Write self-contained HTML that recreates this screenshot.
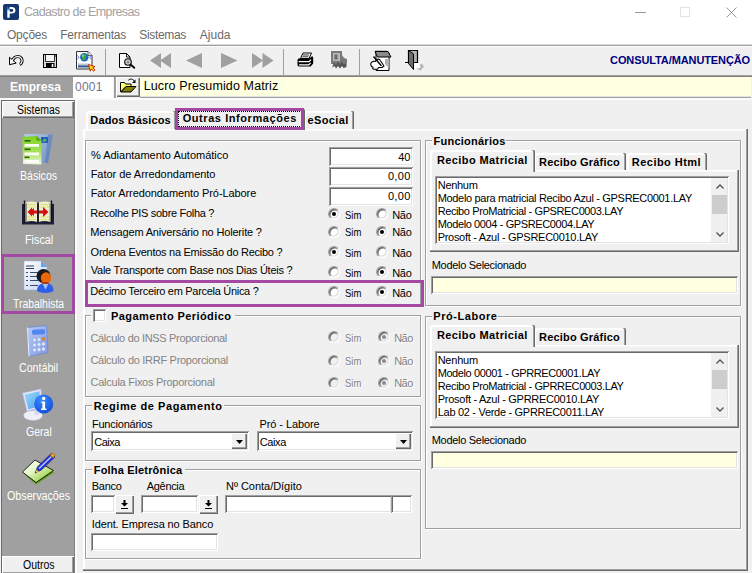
<!DOCTYPE html>
<html lang="pt-BR">
<head>
<meta charset="utf-8">
<title>Cadastro de Empresas</title>
<style>
html,body{margin:0;padding:0;}
body{width:752px;height:573px;overflow:hidden;background:#f0f0f0;position:relative;font-family:"Liberation Sans",sans-serif;font-size:11px;color:#000;}
.a{position:absolute;box-sizing:border-box;}
.t{position:absolute;white-space:pre;line-height:16px;height:16px;font-family:"Liberation Sans",sans-serif;}
.nw{transform-origin:0 0;}
.sunken{background:#fff;box-shadow:inset 1px 1px #a0a0a0,inset -1px -1px #fff,inset 2px 2px #696969,inset -2px -2px #e3e3e3;}
.raised{background:#f0f0f0;box-shadow:inset 1px 1px #fff,inset -1px -1px #696969,inset -2px -2px #a0a0a0;}
.group{border:1px solid #a0a0a0;box-shadow:inset 1px 1px #fff,1px 1px #fff;}
.lg{background:#f0f0f0;}
.yellow{background:#ffffe1;}
.hl{border:3px solid #a349a4;}
.tab{background:#f0f0f0;border-top-left-radius:2px;border-top-right-radius:2px;box-shadow:inset -1px 0 #696969,inset -2px 0 #a0a0a0,inset 2px 2px #fff;}
.page{background:#f0f0f0;box-shadow:inset -1px -1px #696969,inset -2px -2px #a0a0a0,inset 2px 1px #fff,inset 0 2px #f8f8f8;}
.radio{width:12px;height:12px;border-radius:50%;background:#fff;box-shadow:inset 1px 1px 0 0.5px #696969,inset -1px -1px 0 0.5px #e3e3e3;border:1px solid;border-color:#a0a0a0 #fff #fff #a0a0a0;}
.radio.on::after{content:"";position:absolute;left:3px;top:3px;width:4px;height:4px;border-radius:50%;background:#000;}
.radio.dis{background:#f0f0f0;}
.radio.dis.on::after{background:#8a8a8a;}
.sep{width:1px;background:#a0a0a0;top:49px;height:26px;}
svg{position:absolute;overflow:visible;}
</style>
</head>
<body>
<!-- title bar + menu -->
<div class="a" id="titlebar" style="left:0;top:0;width:752px;height:45px;background:#fff;border-bottom:1px solid #dcdcdc;"></div>
<svg style="left:3px;top:4px" width="16" height="16" viewBox="0 0 16 16"><rect width="16" height="16" rx="2" fill="#17386e"/><path d="M4.300 13.700V5.500h2.200V3h2.300c2.300 0 3.700 1.300 3.700 3.300s-1.400 3.300-3.700 3.300H6.700v4.100z M6.700 5v2.800h1.900c1 0 1.600-.5 1.600-1.400S9.600 5 8.600 5z" fill="#fff" fill-rule="evenodd"/><path d="M4 2.600l2.400 3.200-1.300.9z" fill="#39a8e8"/></svg>
<svg style="left:635px;top:12px" width="11" height="1"><rect width="11" height="1" fill="#9a9a9a"/></svg>
<svg style="left:680px;top:7px" width="10" height="10"><rect x=".5" y=".5" width="9" height="9" fill="none" stroke="#e2e2e2"/></svg>
<svg style="left:726px;top:7px" width="11" height="11"><path d="M.5.5l10 10M10.500 .5l-10 10" stroke="#9a9a9a" stroke-width="1" fill="none"/></svg>
<!-- toolbar -->
<div class="a" id="toolbar" style="left:0;top:45px;width:752px;height:32px;background:#f0f0f0;border-top:1px solid #a0a0a0;box-shadow:inset 0 1px #fff,inset 0 -1px #808080,inset 0 -2px #a0a0a0;"></div>
<div class="a sep" style="left:105px"></div>
<div class="a sep" style="left:283px"></div>
<div class="a sep" style="left:359px"></div>
<svg style="left:0;top:46px" width="752" height="30" viewBox="0 46 752 30" shape-rendering="auto">
<path d="M12.300 61.500C13 58.300 15.500 56.300 18.200 56.500c2.800.3 4.300 2.700 3.800 5.200-.3 1.500-1 2.300-2.200 2.800" stroke="#000" stroke-width="3.200" fill="none"/>
<path d="M9.500 57.300v7.400l6.700-1.600z" fill="#f4f4f4" stroke="#000" stroke-width="1" stroke-linejoin="round"/>
<path d="M11.500 62.500C12.500 58.500 15.500 56.300 18.200 56.500c2.800.3 4.300 2.700 3.800 5.200-.3 1.400-.8 2-1.800 2.500" stroke="#f4f4f4" stroke-width="1.300" fill="none"/>
<rect x="43.500" y="54.500" width="13" height="13" fill="#d8d8d8" stroke="#000"/>
<rect x="45.500" y="55" width="8.500" height="6" fill="#f6f6f6"/><path d="M45.500 55v6.500h9V55" fill="none" stroke="#000" stroke-width=".8"/>
<rect x="46" y="63" width="8.500" height="4.500" fill="#000"/><rect x="51.700" y="64" width="1.600" height="3" fill="#fff"/><rect x="55" y="55.500" width="1" height="1" fill="#000"/>
<path d="M76.500 51.500h11.500l4 4v13.500h-15.500z" fill="#fdfdfd" stroke="#333" stroke-width="1"/>
<path d="M88 51.500v4h4" fill="#e4e4e4" stroke="#444" stroke-width=".8"/>
<circle cx="84.300" cy="57.300" r="4.200" fill="#1f63c8"/><path d="M82 54.500c1.800-1.200 3.800-.6 4.300.7s-1.200 2.200-.6 3.500-1.800 2-3 .7-1.200-3.700-.7-4.900z" fill="#38a838"/><circle cx="83" cy="55.800" r="1.100" fill="#9fd4ff" opacity=".8"/>
<path d="M79 57.300l-1.800-2M79 57.300l-1.800 2M89.600 57.300l1.800-2M89.600 57.300l1.800 2" stroke="#5a72e0" stroke-width="1" fill="none"/>
<rect x="78" y="63.500" width="11.500" height="2.500" fill="#b8c4d8"/><rect x="78" y="65.500" width="11.500" height="2" fill="#3a5a90"/>
<path d="M88.500 64.500l6.500 2.200-2.300 1 2.300 2.300-1.300 1.200-2.400-2.300-1 2.300z" fill="#ffe400" stroke="#c81800" stroke-width=".9" stroke-linejoin="round"/>
<path d="M119.500 53.500h7l3.500 3.500v10.500h-10.500z" fill="#fff" stroke="#000" stroke-width="1"/>
<path d="M126.500 53.500v3.500h3.500" fill="none" stroke="#000" stroke-width=".9"/>
<circle cx="128" cy="62" r="3.300" fill="#d8d8d8" stroke="#000" stroke-width="1.100"/><circle cx="128" cy="62" r="1.500" fill="#888"/>
<path d="M130.500 64.500l3.800 3.300" stroke="#000" stroke-width="1.800" stroke-linecap="round"/>
<path d="M150 60.500l11-7.500v15zM160 60.500l11-7.500v15z" fill="#a0a0a0"/>
<path d="M186 60.500l16-7.500v15z" fill="#a0a0a0"/>
<path d="M237.500 60.500l-16.500-7.500v15z" fill="#a0a0a0"/>
<path d="M263 60.500l-11-7.500v15zM273.500 60.500l-11-7.500v15z" fill="#a0a0a0"/>
<path d="M300.500 58.500l2.500-5.500h8.500l-2.500 5.500z" fill="#fff" stroke="#000" stroke-width="1"/>
<path d="M303 55h6M302.300 56.800h6" stroke="#000" stroke-width=".8"/>
<path d="M297.500 60.200c0-1.200 1-2 2.500-2h9.500l2.500-2c1 .3 1.200 1 1.200 2v5.300l-2.500 3h-11.500c-1 0-1.700-.7-1.700-1.700z" fill="#000"/>
<path d="M298.700 61.600h10.300l2-2" stroke="#fff" stroke-width="1.300" fill="none"/>
<path d="M299 64.900h9.800l1.800-2" stroke="#fff" stroke-width="1.200" fill="none"/>
<rect x="331" y="51" width="11" height="13" fill="#7a7a7a"/><rect x="333" y="53" width="7" height="8" fill="#b8b8b8"/><rect x="334.500" y="54.500" width="3" height="5" fill="#6a6a6a"/>
<path d="M332 67.500l2-5 2 2 2-3 2 3 2-4 1.500 3 3-1.500v5l-3 1-1.500-2-2 2.500-2-2.500-2 2.500-1.500-2.500z" fill="#555"/>
<path d="M342 55l2 3 3 1v4l-3 1-2-3z" fill="#777"/>
<path d="M376 53h13v17.500h-13z" fill="#fff" stroke="#000" stroke-width="1"/>
<path d="M375 51.500h13l3 5.500h-13.500z" fill="#8a8a8a" stroke="#000" stroke-width="1"/>
<path d="M376 51.500v-1M378 51.500v-1M380 51.500v-1M382 51.500v-1M384 51.500v-1M386 51.500v-1" stroke="#000" stroke-width=".8"/>
<path d="M385 59h4v9l-4-4z" fill="#b0b0b0"/>
<path d="M371 63c1-1.500 3-2 4.500-1.500l2-2.200c1-.3 2.300.3 2.800 1.200l3.700 5.500-2 1.500h-3.500l-1 1.800h-3.500c-1.300-.2-1.500-1.300-1-2-1.600-.3-2.700-2.400-2-4.300z" fill="#fff" stroke="#000" stroke-width="1.100" stroke-linejoin="round"/>
<path d="M373.500 56.500l8 9.500" stroke="#000" stroke-width="1.300"/>
<path d="M408.500 50.500h9v12h-9z" fill="#b0b0b0" stroke="#000" stroke-width="1.200"/>
<path d="M408.500 50.500l5 3.500v15.500l-5-6z" fill="#6c6c6c" stroke="#000" stroke-width="1"/>
<path d="M405 62.500h4" stroke="#000" stroke-width="1"/>
<path d="M414 63h6v6h-6z" fill="#fff"/>
<path d="M416 68.500l3.500-.3 1.500-1.700-1.500-1.500 2-1.500 2.500 3-3.500 4z" fill="#b4b4b4"/>
</svg>
<!-- empresa row -->
<div class="a" style="left:0;top:77px;width:73px;height:21px;background:#a0a0a0;"></div>
<div class="a" style="left:73px;top:77px;width:40px;height:21px;background:#fff;"></div>
<div class="a" style="left:114px;top:77px;width:2px;height:21px;background:#a0a0a0;"></div>
<div class="a raised" style="left:116px;top:77px;width:24px;height:20px;"></div>
<svg style="left:115px;top:77px" width="25" height="20" viewBox="115 77 25 20">
<path d="M120.500 92V82.500h4l1 1.500h5.500v2.500h-5l-5.500 5.500z" fill="#ffff70" stroke="#000" stroke-width="1" stroke-linejoin="round"/>
<path d="M121 92l5-5.500h10l-5 5.500z" fill="#808000" stroke="#000" stroke-width="1" stroke-linejoin="round"/>
<path d="M128.300 80.300c1.700-1.800 4.500-1.700 6 .8" fill="none" stroke="#000" stroke-width="1"/><path d="M135.500 79.500v3.500h-3.500z" fill="#000"/>
</svg>
<div class="a yellow" style="left:140px;top:77px;width:611px;height:19px;box-shadow:0 1px #e3e3e3,0 2px #a0a0a0;"></div>
<div class="a" style="left:0;top:98px;width:752px;height:2px;background:#fafafa;"></div>
<!-- sidebar -->
<div class="a" id="sidebar" style="left:1px;top:100px;width:74px;height:473px;background:#a0a0a0;border-left:1px solid #696969;border-top:1px solid #696969;border-right:1px solid #808080;"></div>
<div class="a" style="left:75px;top:100px;width:2px;height:473px;background:#fbfbfb;"></div>
<div class="a raised" style="left:2px;top:101px;width:72px;height:17px;"></div>
<div class="a raised" style="left:2px;top:556px;width:72px;height:18px;"></div>
<svg style="left:0;top:100px" width="76" height="473" viewBox="0 100 76 473">
<defs>
<linearGradient id="gG" x1="0" y1="0" x2="0" y2="1"><stop offset="0" stop-color="#7ed321"/><stop offset=".55" stop-color="#a6e25a"/><stop offset="1" stop-color="#eef8e0"/></linearGradient>
<linearGradient id="gB" x1="0" y1="0" x2="1" y2="1"><stop offset="0" stop-color="#b8cbe8"/><stop offset="1" stop-color="#6f8fc4"/></linearGradient>
<linearGradient id="gD" x1="0" y1="0" x2="1" y2="1"><stop offset="0" stop-color="#ffffff"/><stop offset="1" stop-color="#c8d4f4"/></linearGradient>
<linearGradient id="gC" x1="0" y1="0" x2="1" y2="1"><stop offset="0" stop-color="#b8ccf8"/><stop offset="1" stop-color="#7f98e0"/></linearGradient>
<radialGradient id="gI" cx=".4" cy=".3" r=".8"><stop offset="0" stop-color="#3d8bff"/><stop offset="1" stop-color="#0a4ad8"/></radialGradient>
<linearGradient id="gS" x1="0" y1="0" x2="1" y2="1"><stop offset="0" stop-color="#9adcff"/><stop offset="1" stop-color="#4f9fe8"/></linearGradient>
<linearGradient id="gP" x1="0" y1="0" x2="1" y2="1"><stop offset="0" stop-color="#ffffff"/><stop offset=".4" stop-color="#e4f6c8"/><stop offset="1" stop-color="#78c010"/></linearGradient>
</defs>
<path d="M24 134l29 .5-5 28-16 .5z" fill="url(#gB)"/>
<path d="M48 134.500l5 0-5 28.500-3-.5z" fill="#5f7fb8" opacity=".7"/>
<rect x="41" y="137" width="7" height="6" fill="#1f5fc0"/><path d="M42.500 141l2-2.500 2 1-1.500 2.500z" fill="#5fc04a"/>
<path d="M22.500 137l14-1 5 4.500v24l-18.500-.5z" fill="url(#gG)"/>
<path d="M36.500 136l5 4.500-5 .3z" fill="#5fa018"/>
<rect x="24.500" y="144" width="14.500" height="2.800" fill="#fff" opacity=".95"/><rect x="24.500" y="152.500" width="14.500" height="2.800" fill="#fff" opacity=".95"/><rect x="24.500" y="160" width="14.500" height="2.800" fill="#fff" opacity=".95"/>
<rect x="24.500" y="140" width="6" height="1.600" fill="#2f6010"/><rect x="24.500" y="148.500" width="6" height="1.600" fill="#2f6010"/><rect x="24.500" y="156.500" width="5" height="1.600" fill="#2f6010"/>
<path d="M22 204h32v20.500h-32z" fill="#20203a"/>
<path d="M24.500 200.500v22M51.500 200.500v22" stroke="#111" stroke-width="1.400"/>
<path d="M25.500 202.500c4-1.300 8-1.300 11.700 0v19.500c-3.700-1.300-7.700-1.300-11.700 0z" fill="#eeeed0"/>
<path d="M38.800 202.500c3.700-1.300 7.700-1.300 11.700 0v19.500c-4-1.300-8-1.300-11.700 0z" fill="#eeeed0"/>
<path d="M27 204.500h9M27 207h9M27 217h9M27 219.500h9M40.500 204.500h9M40.500 207h9M40.500 217h9M40.500 219.500h9" stroke="#e0e070" stroke-width="1.200"/>
<path d="M26.500 203v19M50 203v19" stroke="#777" stroke-width=".8"/>
<path d="M27.500 212l4.500-4.500v2l2-1.500v2.500h9v-3.500l5.500 5-5.500 5v-3.500h-9v2.500l-2-1.500v2z" fill="#d41010"/>
<path d="M38 202.500v20" stroke="#1a1a1a" stroke-width="1.600"/>
<path d="M24 261h17l6 6v23h-23z" fill="url(#gD)" stroke="#9fb0d8" stroke-width=".6"/>
<path d="M41 261l6 6h-6z" fill="#5fa8f0"/>
<path d="M26 266h8M26 268.500h8" stroke="#2a3a58" stroke-width="1.200"/>
<path d="M26 272.500h2M30 272.500h9M26 276.500h2M30 276.500h8M26 280.500h2M30 280.500h8M26 285.500h2M30 285.500h8" stroke="#3a4a68" stroke-width="1.100"/>
<path d="M37 291c0-5 3-8 8.500-8s8 3 8 8c-3 2.500-13 2.500-16.500 0z" fill="#2f5fe8"/>
<path d="M42.500 283.500l3 6 3-6z" fill="#9fc8ff"/>
<ellipse cx="43.500" cy="276" rx="7" ry="7" fill="#1a1a1a"/>
<ellipse cx="46" cy="278" rx="5.200" ry="5.800" fill="#e8680a"/>
<path d="M42.500 284h6v-2h-6z" fill="#b03a08"/>
<path d="M27.500 327.500l19-2 1.500 27-19 4z" fill="url(#gC)" stroke="#6f88d0" stroke-width=".8"/>
<path d="M27.500 327.500l1.500 29" stroke="#dfe8ff" stroke-width="1.200"/>
<rect x="32" y="329.500" width="13" height="5" rx="1.500" fill="#4f86f0" transform="rotate(-3 38 332)"/>
<circle cx="34.5" cy="340.0" r="1.900" fill="#dfe8ff" stroke="#7f98e0" stroke-width=".5"/>
<circle cx="39.0" cy="339.5" r="1.900" fill="#dfe8ff" stroke="#7f98e0" stroke-width=".5"/>
<circle cx="43.5" cy="339.0" r="1.900" fill="#f08020" stroke="#7f98e0" stroke-width=".5"/>
<circle cx="34.5" cy="345.0" r="1.900" fill="#dfe8ff" stroke="#7f98e0" stroke-width=".5"/>
<circle cx="39.0" cy="344.5" r="1.900" fill="#dfe8ff" stroke="#7f98e0" stroke-width=".5"/>
<circle cx="43.5" cy="344.0" r="1.900" fill="#dfe8ff" stroke="#7f98e0" stroke-width=".5"/>
<circle cx="34.5" cy="350.0" r="1.900" fill="#dfe8ff" stroke="#7f98e0" stroke-width=".5"/>
<circle cx="39.0" cy="349.5" r="1.900" fill="#dfe8ff" stroke="#7f98e0" stroke-width=".5"/>
<circle cx="43.5" cy="349.0" r="1.900" fill="#dfe8ff" stroke="#7f98e0" stroke-width=".5"/>
<ellipse cx="33" cy="415.500" rx="9.500" ry="5" fill="#eef0f8" stroke="#b8b8d0" stroke-width=".6"/>
<path d="M33 406h6v9h-4z" fill="#d8d8f0"/>
<path d="M22.500 393l18.500-4 1 18-15 4.500z" fill="#e8e8f8" stroke="#b0b0d8" stroke-width=".7"/>
<path d="M24.500 394.500l15-3.200.8 14.500-12 3.700z" fill="url(#gS)"/>
<circle cx="43.700" cy="404" r="9.500" fill="url(#gI)"/>
<circle cx="43.700" cy="398.500" r="1.700" fill="#fff"/><path d="M41.500 401.500h3.600v7h1.400v1.500h-5.500v-1.500h1.400v-5.500h-1z" fill="#fff"/>
<path d="M24 474l12 10.500 18-12-2-1.500-16 10z" fill="#5a9a10"/>
<path d="M22.500 472l12.500-12 18.500 10.500-17.500 12z" fill="url(#gP)" stroke="#111" stroke-width=".9"/>
<path d="M35.300 472.700l2.300-6 13.700-13.200 3.500 3.500-13.700 13.200z" fill="#2838e0" stroke="#101060" stroke-width=".7"/>
<path d="M39 468.500l12.500-12" stroke="#c8d0ff" stroke-width="1.100"/>
<path d="M50 455l2.500-2 2.500 2.500-2 2.500z" fill="#e8a820" stroke="#805000" stroke-width=".6"/>
<path d="M35 473.500l1.500-4 2.500 2.500z" fill="#e8c060"/><path d="M35 473.500l.7-1.800 1.100 1.100z" fill="#222"/>
</svg>
<!-- main tab control -->
<div class="a tab" style="left:86px;top:111px;width:90px;height:19px;"></div>
<div class="a tab" style="left:304px;top:111px;width:50px;height:19px;"></div>
<div class="a page" style="left:83px;top:129px;width:665px;height:442px;"></div>
<div class="a tab" style="left:175px;top:109px;width:130px;height:21px;"></div>
<div class="a" style="left:178px;top:111px;width:124px;height:16px;border:1px dotted #000;"></div>
<!-- left groups -->
<div class="a group" style="left:85px;top:140px;width:336px;height:166px;"></div>
<div class="a group" style="left:85px;top:315px;width:336px;height:82px;"></div>
<div class="a lg" style="left:91px;top:308px;width:144px;height:15px;"></div>
<div class="a sunken" style="left:93px;top:309px;width:13px;height:13px;"></div>
<div class="a group" style="left:85px;top:405px;width:336px;height:56px;"></div>
<div class="a lg" style="left:92px;top:398px;width:132px;height:14px;"></div>
<div class="a group" style="left:85px;top:469px;width:336px;height:90px;"></div>
<div class="a lg" style="left:92px;top:462px;width:93px;height:14px;"></div>
<!-- numeric inputs -->
<div class="a sunken" style="left:329px;top:147px;width:84px;height:19px;"></div>
<div class="a sunken" style="left:329px;top:167px;width:84px;height:19px;"></div>
<div class="a sunken" style="left:329px;top:187px;width:84px;height:19px;"></div>
<div class="a radio on" style="left:328px;top:208px"></div>
<div class="a radio" style="left:376px;top:208px"></div>
<div class="a radio" style="left:328px;top:226px"></div>
<div class="a radio on" style="left:376px;top:226px"></div>
<div class="a radio on" style="left:328px;top:246px"></div>
<div class="a radio" style="left:376px;top:246px"></div>
<div class="a radio" style="left:328px;top:266px"></div>
<div class="a radio on" style="left:376px;top:266px"></div>
<div class="a radio" style="left:328px;top:286px"></div>
<div class="a radio on" style="left:376px;top:286px"></div>
<div class="a radio dis" style="left:328px;top:331px"></div>
<div class="a radio dis on" style="left:378px;top:331px"></div>
<div class="a radio dis" style="left:328px;top:355px"></div>
<div class="a radio dis on" style="left:378px;top:355px"></div>
<div class="a radio dis" style="left:328px;top:377px"></div>
<div class="a radio dis on" style="left:378px;top:377px"></div>
<!-- combos -->
<div class="a sunken" style="left:91px;top:431px;width:158px;height:20px;"></div>
<div class="a raised" style="left:231px;top:433px;width:16px;height:16px;"></div>
<svg style="left:236px;top:440px" width="7" height="4"><path d="M0 0h7L3.500 4z" fill="#000"/></svg>
<div class="a sunken" style="left:257px;top:431px;width:156px;height:20px;"></div>
<div class="a raised" style="left:395px;top:433px;width:16px;height:16px;"></div>
<svg style="left:400px;top:440px" width="7" height="4"><path d="M0 0h7L3.500 4z" fill="#000"/></svg>
<!-- folha eletronica -->
<div class="a sunken" style="left:91px;top:495px;width:24px;height:18px;"></div>
<div class="a raised" style="left:115px;top:495px;width:19px;height:19px;"></div>
<svg style="left:121px;top:500px" width="7" height="9"><path d="M2.500 0h2v3H7L3.500 6.500 0 3h2.500zM0 8h7v1H0z" fill="#000"/></svg>
<div class="a sunken" style="left:141px;top:495px;width:57px;height:18px;"></div>
<div class="a raised" style="left:199px;top:495px;width:19px;height:19px;"></div>
<svg style="left:205px;top:500px" width="7" height="9"><path d="M2.500 0h2v3H7L3.500 6.500 0 3h2.500zM0 8h7v1H0z" fill="#000"/></svg>
<div class="a sunken" style="left:225px;top:495px;width:167px;height:18px;"></div>
<div class="a sunken" style="left:391px;top:495px;width:21px;height:18px;"></div>
<div class="a sunken" style="left:91px;top:533px;width:127px;height:18px;"></div>
<div class="a group" style="left:425px;top:140px;width:316px;height:166px;"></div>
<div class="a lg" style="left:432px;top:133px;width:74px;height:14px;"></div>
<div class="a tab" style="left:534px;top:153px;width:92px;height:18px;"></div>
<div class="a tab" style="left:627px;top:153px;width:80px;height:18px;"></div>
<div class="a page" style="left:430px;top:170px;width:309px;height:82px;"></div>
<div class="a tab" style="left:430px;top:150px;width:105px;height:22px;"></div>
<div class="a sunken" style="left:435px;top:176px;width:294px;height:68px;"></div>
<div class="a" style="left:711px;top:178px;width:16px;height:64px;background:#f0f0f0;"></div>
<div class="a" style="left:712px;top:195px;width:15px;height:19px;background:#cdcdcd;"></div>
<svg style="left:716px;top:184px" width="8" height="5"><path d="M.5 4.500L4 1l3.500 3.500" fill="none" stroke="#505050" stroke-width="1.300"/></svg>
<svg style="left:716px;top:232px" width="8" height="5"><path d="M.5 .5L4 4l3.500-3.500" fill="none" stroke="#505050" stroke-width="1.300"/></svg>
<div class="a sunken yellow" style="left:431px;top:276px;width:307px;height:18px;"></div>
<div class="a group" style="left:425px;top:316px;width:316px;height:213px;"></div>
<div class="a lg" style="left:432px;top:308px;width:66px;height:14px;"></div>
<div class="a tab" style="left:534px;top:328px;width:92px;height:18px;"></div>
<div class="a page" style="left:430px;top:345px;width:309px;height:83px;"></div>
<div class="a tab" style="left:430px;top:325px;width:105px;height:22px;"></div>
<div class="a sunken" style="left:435px;top:351px;width:294px;height:68px;"></div>
<div class="a" style="left:711px;top:353px;width:16px;height:64px;background:#f0f0f0;"></div>
<div class="a" style="left:712px;top:370px;width:15px;height:19px;background:#cdcdcd;"></div>
<svg style="left:716px;top:359px" width="8" height="5"><path d="M.5 4.500L4 1l3.500 3.500" fill="none" stroke="#505050" stroke-width="1.300"/></svg>
<svg style="left:716px;top:407px" width="8" height="5"><path d="M.5 .5L4 4l3.500-3.500" fill="none" stroke="#505050" stroke-width="1.300"/></svg>
<div class="a sunken yellow" style="left:431px;top:451px;width:307px;height:18px;"></div>
<span class="t" style="left:23.88px;top:4px;font-size:12.5px;letter-spacing:-0.614px;color:#a2a2a2;">Cadastro de Empresas</span>
<span class="t" style="left:6.97px;top:27px;font-size:12px;letter-spacing:-0.2px;color:#6a6a6a;">Opções</span>
<span class="t" style="left:60.24px;top:27px;font-size:12px;letter-spacing:-0.198px;color:#6a6a6a;">Ferramentas</span>
<span class="t" style="left:139.3px;top:27px;font-size:12px;letter-spacing:-0.333px;color:#6a6a6a;">Sistemas</span>
<span class="t" style="left:199.83px;top:27px;font-size:12px;letter-spacing:-0.01px;color:#6a6a6a;">Ajuda</span>
<span class="t" style="left:610.07px;top:52px;letter-spacing:-0.103px;font-weight:bold;color:#000080;">CONSULTA/MANUTENÇÃO</span>
<span class="t" style="left:9.89px;top:79px;font-size:12px;letter-spacing:0.039px;font-weight:bold;color:#fff;">Empresa</span>
<span class="t" style="left:75.05px;top:79px;font-size:12px;letter-spacing:0.217px;color:#74748a;">0001</span>
<span class="t" style="left:143.7px;top:78px;font-size:12.5px;letter-spacing:0.123px;">Lucro Presumido Matriz</span>
<span class="t nw" style="left:16.87px;top:102px;font-size:12.5px;transform:scaleX(0.837);">Sistemas</span>
<span class="t nw" style="left:19.85px;top:168px;font-size:12.5px;transform:scaleX(0.848);color:#fff;">Básicos</span>
<span class="t nw" style="left:24.83px;top:232px;font-size:12.5px;transform:scaleX(0.864);color:#fff;">Fiscal</span>
<span class="t nw" style="left:13.3px;top:296px;font-size:12.5px;transform:scaleX(0.832);color:#fff;">Trabalhista</span>
<span class="t nw" style="left:18.86px;top:360px;font-size:12.5px;transform:scaleX(0.852);color:#fff;">Contábil</span>
<span class="t nw" style="left:25.89px;top:424px;font-size:12.5px;transform:scaleX(0.842);color:#fff;">Geral</span>
<span class="t nw" style="left:6.74px;top:488px;font-size:12.5px;transform:scaleX(0.857);color:#fff;">Observações</span>
<span class="t nw" style="left:22.88px;top:557px;font-size:12.5px;transform:scaleX(0.842);">Outros</span>
<span class="t" style="left:90.34px;top:112px;letter-spacing:0.118px;font-weight:bold;">Dados Básicos</span>
<span class="t" style="left:182.63px;top:110px;letter-spacing:0.575px;font-weight:bold;">Outras Informações</span>
<span class="t" style="left:307.52px;top:112px;letter-spacing:0.374px;font-weight:bold;">eSocial</span>
<span class="t" style="left:90.96px;top:147px;letter-spacing:-0.008px;">% Adiantamento Automático</span>
<span class="t" style="left:90.63px;top:166px;letter-spacing:-0.023px;">Fator de Arredondamento</span>
<span class="t" style="left:90.63px;top:185px;letter-spacing:-0.082px;">Fator Arredondamento Pró-Labore</span>
<span class="t" style="left:90.28px;top:205px;letter-spacing:-0.302px;">Recolhe PIS sobre Folha ?</span>
<span class="t" style="left:90.36px;top:224px;letter-spacing:-0.173px;">Mensagem Aniversário no Holerite ?</span>
<span class="t" style="left:90.61px;top:244px;letter-spacing:-0.274px;">Ordena Eventos na Emissão do Recibo ?</span>
<span class="t" style="left:90.8px;top:262px;letter-spacing:-0.253px;">Vale Transporte com Base nos Dias Úteis ?</span>
<span class="t" style="left:90.28px;top:283px;letter-spacing:-0.296px;">Décimo Terceiro em Parcela Única ?</span>
<span class="t" style="left:398.2px;top:149px;letter-spacing:-0.09px;">40</span>
<span class="t" style="left:387.88px;top:168px;letter-spacing:0.36px;">0,00</span>
<span class="t" style="left:387.88px;top:188px;letter-spacing:0.36px;">0,00</span>
<span class="t nw" style="left:344.64px;top:207px;transform:scaleX(0.862);">Sim</span>
<span class="t" style="left:392.19px;top:207px;letter-spacing:-0.257px;">Não</span>
<span class="t nw" style="left:344.64px;top:224px;transform:scaleX(0.862);">Sim</span>
<span class="t" style="left:392.19px;top:224px;letter-spacing:-0.257px;">Não</span>
<span class="t nw" style="left:344.64px;top:245px;transform:scaleX(0.862);">Sim</span>
<span class="t" style="left:392.19px;top:245px;letter-spacing:-0.257px;">Não</span>
<span class="t nw" style="left:344.64px;top:265px;transform:scaleX(0.862);">Sim</span>
<span class="t" style="left:392.19px;top:265px;letter-spacing:-0.257px;">Não</span>
<span class="t nw" style="left:344.64px;top:285px;transform:scaleX(0.862);">Sim</span>
<span class="t" style="left:392.19px;top:285px;letter-spacing:-0.257px;">Não</span>
<span class="t" style="left:110.98px;top:308px;letter-spacing:0.417px;font-weight:bold;">Pagamento Periódico</span>
<span class="t" style="left:90.46px;top:330px;letter-spacing:-0.321px;color:#838383;">Cálculo do INSS Proporcional</span>
<span class="t" style="left:90.46px;top:352px;letter-spacing:-0.287px;color:#838383;">Cálculo do IRRF Proporcional</span>
<span class="t" style="left:90.56px;top:374px;letter-spacing:-0.257px;color:#838383;">Calcula Fixos Proporcional</span>
<span class="t nw" style="left:344.64px;top:330px;transform:scaleX(0.862);color:#838383;text-shadow:1px 1px 0 #fff;">Sim</span>
<span class="t" style="left:394.17px;top:330px;letter-spacing:-0.49px;color:#838383;text-shadow:1px 1px 0 #fff;">Não</span>
<span class="t nw" style="left:344.64px;top:353px;transform:scaleX(0.862);color:#838383;text-shadow:1px 1px 0 #fff;">Sim</span>
<span class="t" style="left:394.17px;top:353px;letter-spacing:-0.49px;color:#838383;text-shadow:1px 1px 0 #fff;">Não</span>
<span class="t nw" style="left:344.64px;top:375px;transform:scaleX(0.862);color:#838383;text-shadow:1px 1px 0 #fff;">Sim</span>
<span class="t" style="left:394.17px;top:375px;letter-spacing:-0.49px;color:#838383;text-shadow:1px 1px 0 #fff;">Não</span>
<span class="t" style="left:93.83px;top:398px;letter-spacing:0.558px;font-weight:bold;">Regime de Pagamento</span>
<span class="t" style="left:91.95px;top:416px;letter-spacing:-0.22px;">Funcionários</span>
<span class="t" style="left:259.53px;top:416px;letter-spacing:-0.088px;">Pró - Labore</span>
<span class="t" style="left:94.24px;top:434px;letter-spacing:-0.484px;">Caixa</span>
<span class="t" style="left:259.76px;top:434px;letter-spacing:-0.401px;">Caixa</span>
<span class="t" style="left:93.83px;top:462px;letter-spacing:0.177px;font-weight:bold;">Folha Eletrônica</span>
<span class="t" style="left:91.82px;top:478px;letter-spacing:-0.3px;">Banco</span>
<span class="t" style="left:146.86px;top:478px;letter-spacing:-0.348px;">Agência</span>
<span class="t" style="left:226.02px;top:478px;letter-spacing:-0.029px;">Nº Conta/Dígito</span>
<span class="t" style="left:91.72px;top:516px;letter-spacing:-0.118px;">Ident. Empresa no Banco</span>
<span class="t" style="left:433.49px;top:133px;letter-spacing:0.249px;font-weight:bold;">Funcionários</span>
<span class="t" style="left:436.98px;top:152px;letter-spacing:0.403px;font-weight:bold;">Recibo Matricial</span>
<span class="t" style="left:539.03px;top:154px;letter-spacing:0.191px;font-weight:bold;">Recibo Gráfico</span>
<span class="t" style="left:631.81px;top:154px;letter-spacing:0.468px;font-weight:bold;">Recibo Html</span>
<span class="t" style="left:437.76px;top:177px;letter-spacing:-0.305px;">Nenhum</span>
<span class="t" style="left:437.63px;top:190px;letter-spacing:-0.315px;">Modelo para matricial Recibo Azul - GPSREC0001.LAY</span>
<span class="t" style="left:437.63px;top:203px;letter-spacing:-0.378px;">Recibo ProMatricial - GPSREC0003.LAY</span>
<span class="t" style="left:437.68px;top:216px;letter-spacing:-0.385px;">Modelo 0004 - GPSREC0004.LAY</span>
<span class="t" style="left:437.63px;top:229px;letter-spacing:-0.281px;">Prosoft - Azul - GPSREC0010.LAY</span>
<span class="t" style="left:431.76px;top:257px;letter-spacing:-0.301px;">Modelo Selecionado</span>
<span class="t" style="left:433.34px;top:308px;letter-spacing:0.546px;font-weight:bold;">Pró-Labore</span>
<span class="t" style="left:436.98px;top:327px;letter-spacing:0.403px;font-weight:bold;">Recibo Matricial</span>
<span class="t" style="left:539.03px;top:329px;letter-spacing:0.191px;font-weight:bold;">Recibo Gráfico</span>
<span class="t" style="left:437.63px;top:352px;letter-spacing:-0.212px;">Nenhum</span>
<span class="t" style="left:437.63px;top:365px;letter-spacing:-0.397px;">Modelo 00001 - GPRREC0001.LAY</span>
<span class="t" style="left:437.76px;top:378px;letter-spacing:-0.386px;">Recibo ProMatricial - GPRREC0003.LAY</span>
<span class="t" style="left:437.76px;top:391px;letter-spacing:-0.272px;">Prosoft - Azul - GPRREC0010.LAY</span>
<span class="t" style="left:437.76px;top:404px;letter-spacing:-0.3px;">Lab 02 - Verde - GPRREC0011.LAY</span>
<span class="t" style="left:431.76px;top:432px;letter-spacing:-0.301px;">Modelo Selecionado</span>
<!-- highlight boxes -->
<div class="a hl" style="left:175px;top:108px;width:129px;height:22px;"></div>
<div class="a hl" style="left:1px;top:254px;width:74px;height:60px;"></div>
<div class="a hl" style="left:85px;top:280px;width:339px;height:27px;"></div>
</body>
</html>
